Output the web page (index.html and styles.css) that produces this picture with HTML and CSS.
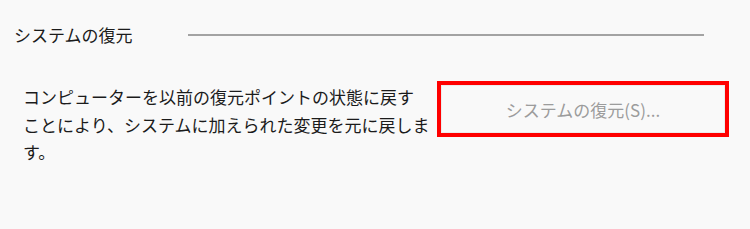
FILE: index.html
```html
<!DOCTYPE html>
<html lang="ja">
<head>
<meta charset="utf-8">
<link rel="stylesheet" href="styles.css">
</head>
<body>
<div class="panel">
  <div class="header">
    <span class="title">システムの復元</span>
    <span class="rule"></span>
  </div>
  <div class="content">
    <p class="desc">コンピューターを以前の復元ポイントの状態に戻す<br>ことにより、システムに加えられた変更を元に戻しま<br>す。</p>
    <div class="btn-frame">
      <button class="btn" disabled>システムの復元(S)...</button>
    </div>
  </div>
</div>
</body>
</html>
```
FILE: styles.css
```css
html, body {
  margin: 0;
  padding: 0;
  background: #f9f9f9;
}
body {
  width: 750px;
  height: 229px;
  overflow: hidden;
  font-family: "Noto Sans CJK JP", "Noto Sans", sans-serif;
  color: #1b1b1b;
}
.panel {
  padding-top: 24px;
}
.header {
  display: flex;
  align-items: center;
  padding-left: 14px;
  padding-right: 46px;
  height: 22px;
}
.title {
  font-size: 17px;
  line-height: 22px;
  white-space: nowrap;
}
.rule {
  flex: 1;
  height: 2px;
  background: #a3a3a3;
  margin-left: 55px;
  margin-top: -1px;
}
.content {
  display: flex;
  align-items: flex-start;
  padding-left: 23px;
  margin-top: 37px;
}
.desc {
  margin: 0;
  width: 414px;
  font-size: 17px;
  line-height: 27.5px;
  white-space: nowrap;
}
.btn-frame {
  margin-top: -2px;
  width: 284px;
  height: 48px;
  border: 4px solid #ff0000;
  display: flex;
}
.btn {
  flex: 1;
  margin: 0;
  border: 1px solid #ececec;
  background: #f9f9f9;
  color: #9c9c9c;
  font-family: "Noto Sans CJK JP", "Noto Sans", sans-serif;
  font-size: 17px;
  padding: 0;
}
```
